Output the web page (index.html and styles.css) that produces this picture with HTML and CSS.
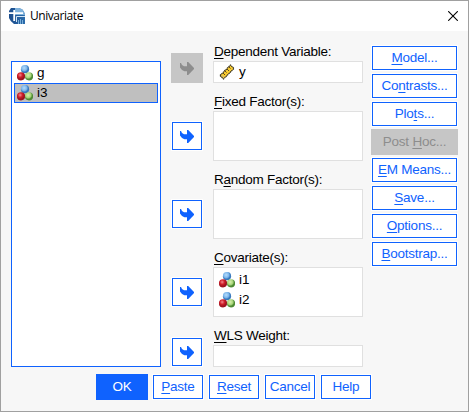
FILE: index.html
```html
<!DOCTYPE html>
<html lang="en">
<head>
<meta charset="utf-8">
<title>Univariate</title>
<link rel="stylesheet" href="styles.css">
</head>
<body>
<svg width="0" height="0" class="defs">
  <defs>
    <radialGradient id="rb" cx=".4" cy=".35"><stop offset="0" stop-color="#b5dcfa"/><stop offset=".65" stop-color="#7db7ec"/><stop offset="1" stop-color="#3979bd"/></radialGradient>
    <radialGradient id="rr" cx=".4" cy=".35"><stop offset="0" stop-color="#f08a8e"/><stop offset=".55" stop-color="#d2202b"/><stop offset="1" stop-color="#9c1420"/></radialGradient>
    <radialGradient id="rg" cx=".4" cy=".35"><stop offset="0" stop-color="#d9f0b0"/><stop offset=".65" stop-color="#a8d67a"/><stop offset="1" stop-color="#4f8b35"/></radialGradient>
    <linearGradient id="lg" x1="0" y1="0" x2="1" y2="0"><stop offset="0" stop-color="#1b4c8c"/><stop offset="1" stop-color="#2c6cab"/></linearGradient>
    <symbol id="nominal" viewBox="0 0 16 16">
      <circle cx="8" cy="4.2" r="4.1" fill="url(#rb)"/>
      <circle cx="4" cy="11.3" r="4.1" fill="url(#rr)"/>
      <circle cx="12" cy="11.3" r="4.1" fill="url(#rg)"/>
    </symbol>
    <symbol id="arrow" viewBox="0 0 14 13">
      <path d="M0 1H1L2 3L4 4.3H7V0H8.2L14 6V7L8.2 13H7V9.2H4.5L2 8L0 5.5Z" fill="currentColor"/>
    </symbol>
  </defs>
</svg>
<div class="window">
  <header class="titlebar">
    <svg class="logo" viewBox="0 0 16 16"><path d="M2 0H10Q16 2 16 8V16H5Q1 13 0 10V3Z" fill="url(#lg)"/><path d="M6 0H10Q15 1 16 7H6Z" fill="#7fb2dc"/><path d="M0 5.2H14M5.2 2V13" stroke="#fff" stroke-width="1.8"/><path d="M7.5 14V8.5H16" fill="none" stroke="#d4e6f5"/><path d="M9.5 16V12M11.5 16V11M13.5 16V12" stroke="#78afd9"/></svg>
    <span class="title">Univariate</span>
    <svg class="close" viewBox="0 0 10 10"><path d="M.2.2L9.8 9.8M9.8.2L.2 9.8" stroke="#000" stroke-width="1.1"/></svg>
  </header>
  <main class="content">
    <div class="source">
      <div class="item"><svg class="icon"><use href="#nominal"/></svg><span>g</span></div>
      <div class="item selected"><svg class="icon"><use href="#nominal"/></svg><span>i3</span></div>
    </div>
    <div class="targets">
      <div class="group">
        <button class="move off"><svg><use href="#arrow"/></svg></button>
        <label><span><u>D</u>ependent Variable:</span></label>
        <div class="field"><div class="item"><svg class="icon" viewBox="0 0 16 16"><path d="M1 11.5L11.5 1L15 4.5L4.5 15Z" fill="#f8cb30" stroke="#282418" stroke-width="1.1" stroke-dasharray="1.5 .5"/><path d="M4 9L6 11M6 7L7.5 8.5M8 5L10 7M10 3L11.5 4.5" stroke="#5a481c"/><path d="M3 11.5L5 13.5" stroke="#aaa"/></svg><span>y</span></div></div>
      </div>
      <div class="group tall">
        <button class="move"><svg><use href="#arrow"/></svg></button>
        <label><span><u>F</u>ixed Factor(s):</span></label>
        <div class="field"></div>
      </div>
      <div class="group tall">
        <button class="move"><svg><use href="#arrow"/></svg></button>
        <label><span>R<u>a</u>ndom Factor(s):</span></label>
        <div class="field"></div>
      </div>
      <div class="group tall">
        <button class="move"><svg><use href="#arrow"/></svg></button>
        <label><span><u>C</u>ovariate(s):</span></label>
        <div class="field">
          <div class="item"><svg class="icon"><use href="#nominal"/></svg><span>i1</span></div>
          <div class="item"><svg class="icon"><use href="#nominal"/></svg><span>i2</span></div>
        </div>
      </div>
      <div class="group last">
        <button class="move"><svg><use href="#arrow"/></svg></button>
        <label><span><u>W</u>LS Weight:</span></label>
        <div class="field"></div>
      </div>
    </div>
    <div class="options">
      <button class="btn"><span><u>M</u>odel...</span></button>
      <button class="btn"><span>Co<u>n</u>trasts...</span></button>
      <button class="btn"><span>Plo<u>t</u>s...</span></button>
      <button class="btn off"><span>Post <u>H</u>oc...</span></button>
      <button class="btn"><span><u>E</u>M Means...</span></button>
      <button class="btn"><span><u>S</u>ave...</span></button>
      <button class="btn"><span><u>O</u>ptions...</span></button>
      <button class="btn"><span><u>B</u>ootstrap...</span></button>
    </div>
  </main>
  <footer class="actions">
    <button class="btn primary">OK</button>
    <button class="btn"><span><u>P</u>aste</span></button>
    <button class="btn"><span><u>R</u>eset</span></button>
    <button class="btn">Cancel</button>
    <button class="btn">Help</button>
  </footer>
</div>
</body>
</html>
```
FILE: styles.css
```css
* { box-sizing: border-box; }
body { margin: 0; font: 13.5px/20px "Liberation Sans", Arial, sans-serif; letter-spacing: -.25px; color: #000; overflow: hidden; }
button { font: inherit; letter-spacing: inherit; padding: 0; margin: 0; border-radius: 0; }
svg { display: block; flex: none; }
.defs { position: absolute; }
u { text-underline-offset: 2px; text-decoration-thickness: 1px; text-decoration-skip-ink: none; }
.window { width: 469px; height: 412px; border: 1px solid #a0a0a0; background: #f7f7f7; }
.titlebar { height: 30px; background: #fff; display: flex; align-items: center; padding: 0 10px 0 8px; }
.logo { width: 16px; height: 16px; margin-right: 5px; }
.title { font: 12px/16px "Open Sans", sans-serif; letter-spacing: -.45px; flex: 1; }
.close { width: 10px; height: 10px; }
.content { display: flex; height: 336px; padding: 11px 0 0 10px; }
.source { width: 150px; height: 306px; margin-top: 19px; border: 1px solid #0f62fe; background: #fff; padding: 1px 2px; }
.item { display: flex; align-items: center; height: 20px; gap: 4px; padding-left: 3px; white-space: nowrap; letter-spacing: 0; }
.icon { width: 16px; height: 16px; }
.selected { background: #bfbfbf; border: 1px solid #0f62fe; padding-left: 2px; }
.targets { width: 192px; margin-left: 10px; display: flex; flex-direction: column; gap: 9px; }
.group { display: grid; grid-template-columns: 32px 150px; grid-template-rows: 19px 22px; column-gap: 10px; }
.group.tall { grid-template-rows: 19px 50px; }
.group label { grid-column: 2; grid-row: 1; line-height: 19px; padding-left: 1px; white-space: nowrap; }
.field { grid-column: 2; grid-row: 2; border: 1px solid #e0e0e0; background: #fff; padding-left: 2px; }
.tall .field { padding-top: 2px; }
.move { grid-column: 1; grid-row: 1 / 3; justify-self: center; align-self: end; width: 30px; height: 28px; border: 1px solid #0f62fe; background: #fff; color: #0f62fe; box-shadow: 0 0 0 1px #fff; display: flex; align-items: center; justify-content: center; }
.move svg { width: 14px; height: 13px; }
.tall .move { margin-bottom: 11px; }
.last .move { margin-bottom: 1px; }
.move.off { width: 32px; height: 30px; background: #c6c6c6; border: 0; box-shadow: none; color: #8d8d8d; }
.options { width: 85px; margin-left: 9px; padding-top: 4px; display: flex; flex-direction: column; gap: 4px; }
.btn { height: 24px; flex: none; border: 1px solid #0f62fe; background: #fff; color: #0f62fe; box-shadow: 0 0 0 1px #fff; line-height: 22px; white-space: nowrap; }
.btn.off { background: #c6c6c6; border-color: #c6c6c6; box-shadow: 0 0 0 1px #c6c6c6; color: #8d8d8d; }
.actions { display: flex; gap: 6px; padding: 8px 0 0 96px; }
.actions .btn { width: 50px; }
.btn.primary { background: #0f62fe; color: #fff; box-shadow: 0 0 0 1px #0f62fe; }
```
